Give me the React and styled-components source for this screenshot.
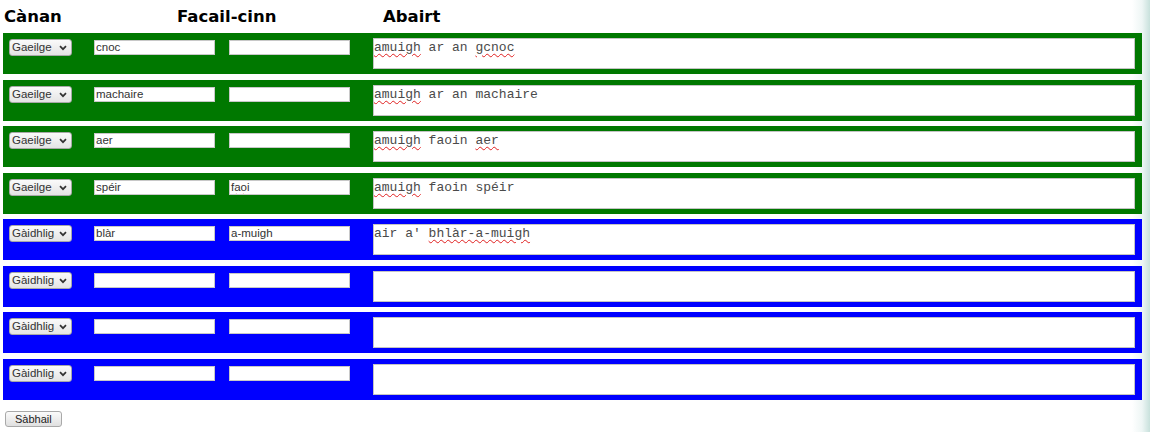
import React from "react"
import styled, { createGlobalStyle } from "styled-components"

const GlobalStyle = createGlobalStyle`
  html, body {
    margin: 0;
    padding: 0;
    background: linear-gradient(90deg, #fff 0, #fff 1132px, #eef6f5 1142px, #c8e1dc 1150px);
    font-family: "Liberation Sans", Arial, sans-serif;
  }
`

const Page = styled.div`
  width: 1139px;
  padding: 7px 0 0 3px;
`

const HeaderRow = styled.div`
  display: grid;
  grid-template-columns: 173px 206px 1fr;
  height: 26px;
`

const Heading = styled.div`
  font-family: "DejaVu Sans", Verdana, sans-serif;
  font-weight: bold;
  font-size: 16.5px;
  line-height: 19px;
  color: #000;
  padding-left: 1px;
`

const Rows = styled.div`
  display: flex;
  flex-direction: column;
  gap: 5.5px;
`

const Row = styled.div`
  display: flex;
  align-items: flex-start;
  height: 41px;
  box-sizing: border-box;
  padding: 5px 7px 0 6px;
  background: ${p => p.bg};
`

const SelectBox = styled.div`
  position: relative;
  width: 63px;
  height: 17px;
  margin-top: 1px;
  box-sizing: border-box;
  border: 1px solid #a8a8a8;
  border-radius: 3px;
  background: linear-gradient(#fafafa, #e4e4e4);
  font-size: 11.5px;
  line-height: 15px;
  color: #333;
  padding-left: 2px;
  flex: none;
`

const Chevron = styled.svg`
  position: absolute;
  right: 4px;
  top: 5px;
`

const Field = styled.div`
  width: 121px;
  height: 15px;
  margin-top: 2px;
  margin-left: ${p => p.gap}px;
  box-sizing: border-box;
  background: #fff;
  border: 1px solid #c8c8c8;
  font-size: 11.5px;
  line-height: 13px;
  color: #333;
  padding-left: 1px;
  white-space: nowrap;
  overflow: hidden;
  flex: none;
`

const Sentence = styled.div`
  flex: 1;
  height: 31px;
  margin-left: 23px;
  box-sizing: border-box;
  background: #fff;
  border: 1px solid #c4c4c4;
  font-family: "Liberation Mono", "Courier New", monospace;
  font-size: 13px;
  line-height: 15px;
  color: #4a4a4a;
  padding: 1px 0 0 0;
  white-space: pre;
`

const Misspelled = styled.span`
  text-decoration: underline wavy #e02020;
  text-decoration-thickness: 1px;
  text-underline-offset: 2px;
`

const SaveButton = styled.button`
  margin: 11px 0 0 2px;
  height: 16px;
  padding: 0 9px;
  font-family: "Liberation Sans", Arial, sans-serif;
  font-size: 11px;
  line-height: 14px;
  color: #222;
  border: 1px solid #a9a9a9;
  border-radius: 3px;
  background: linear-gradient(#fbfbfb, #e0e0e0);
`

const entries = [
  { lang: "Gaeilge", bg: "#007800", w1: "cnoc", w2: "", s: "~amuigh~ ar an ~gcnoc~" },
  { lang: "Gaeilge", bg: "#007800", w1: "machaire", w2: "", s: "~amuigh~ ar an machaire" },
  { lang: "Gaeilge", bg: "#007800", w1: "~aer~", w2: "", s: "~amuigh~ faoin ~aer~" },
  { lang: "Gaeilge", bg: "#007800", w1: "spéir", w2: "~faoi~", s: "~amuigh~ faoin spéir" },
  { lang: "Gàidhlig", bg: "#0000ff", w1: "blàr", w2: "a-muigh", s: "air a' ~bhlàr-a-muigh~" },
  { lang: "Gàidhlig", bg: "#0000ff", w1: "", w2: "", s: "" },
  { lang: "Gàidhlig", bg: "#0000ff", w1: "", w2: "", s: "" },
  { lang: "Gàidhlig", bg: "#0000ff", w1: "", w2: "", s: "" },
]

// words between ~ ~ get the red spell-check squiggle
const renderText = text =>
  text.split("~").map((part, i) =>
    i % 2 ? <Misspelled key={i}>{part}</Misspelled> : part
  )

export default function App() {
  return (
    <>
      <GlobalStyle />
      <Page>
        <HeaderRow>
          <Heading>Cànan</Heading>
          <Heading>Facail-cinn</Heading>
          <Heading>Abairt</Heading>
        </HeaderRow>
        <Rows>
          {entries.map((e, idx) => (
            <Row bg={e.bg} key={idx}>
              <SelectBox>
                {e.lang}
                <Chevron width="8" height="6" viewBox="0 0 8 6">
                  <path d="M1 1.2 L4 4.2 L7 1.2" fill="none" stroke="#333" strokeWidth="1.7" />
                </Chevron>
              </SelectBox>
              <Field gap={22}>{renderText(e.w1)}</Field>
              <Field gap={14}>{renderText(e.w2)}</Field>
              <Sentence>{renderText(e.s)}</Sentence>
            </Row>
          ))}
        </Rows>
        <SaveButton>Sàbhail</SaveButton>
      </Page>
    </>
  )
}
